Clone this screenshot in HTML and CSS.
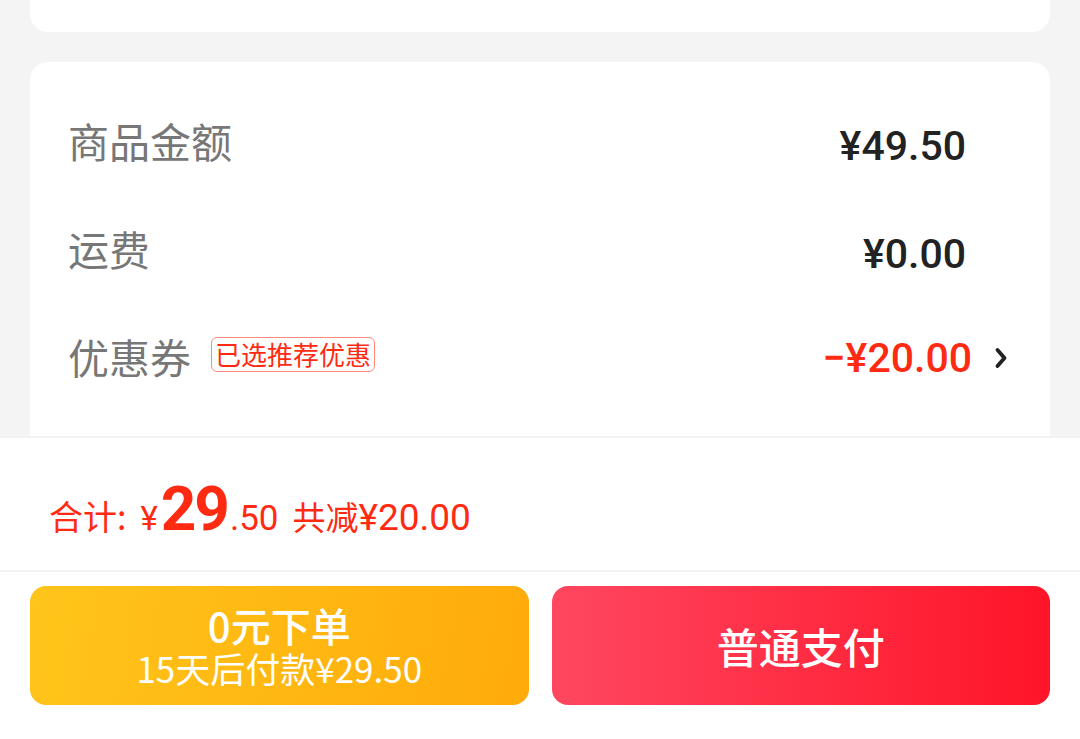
FILE: index.html
```html
<!DOCTYPE html>
<html lang="zh">
<head>
<meta charset="utf-8">
<link rel="stylesheet" href="styles.css">
</head>
<body>
<div class="page">
  <div class="card card-top"></div>
  <div class="card card-sum">
    <div class="row">
      <span class="label">商品金额</span>
      <span class="amount">¥49.50</span>
    </div>
    <div class="row">
      <span class="label">运费</span>
      <span class="amount">¥0.00</span>
    </div>
    <div class="row">
      <span class="label">优惠券</span>
      <span class="tag">已选推荐优惠</span>
      <span class="amount red">−¥20.00</span>
      <svg class="chev" width="14" height="26" viewBox="0 0 14 26"><path d="M3.5 5 L10.5 13 L3.5 21" fill="none" stroke="#222" stroke-width="3.8" stroke-linecap="round" stroke-linejoin="round"/></svg>
    </div>
  </div>
</div>
<div class="bar">
  <div class="total">
    <span class="t-label">合计:</span>
    <span class="t-yen">¥</span><span class="t-int">29</span><span class="t-dec">.50</span>
    <span class="t-save">共减</span><span class="t-save-num">¥20.00</span>
  </div>
  <div class="actions">
    <button class="btn btn-later">
      <span class="b-main">0元下单</span>
      <span class="b-sub">15天后付款¥29.50</span>
    </button>
    <button class="btn btn-pay">普通支付</button>
  </div>
</div>
</body>
</html>
```

FILE: styles.css
```css
html, body {
  margin: 0;
  padding: 0;
  height: 100%;
  overflow: hidden;
  background: #f4f4f4;
  font-family: "Noto Sans CJK SC", "Noto Sans", sans-serif;
}
.page {
  display: flex;
  flex-direction: column;
  gap: 30px;
  padding: 0 30px;
}
.card {
  background: #fff;
  border-radius: 18px;
}
.card-top {
  height: 32px;
  border-radius: 0 0 18px 18px;
}
.card-sum {
  padding: 27px 38px 60px 38px;
  display: flex;
  flex-direction: column;
}
.row {
  height: 108px;
  display: flex;
  align-items: center;
}
.label {
  font-size: 41px;
  color: #777;
  line-height: 1;
  margin-top: -6px;
}
.tag {
  margin-left: 20px;
  font-size: 26px;
  line-height: 1;
  color: #ff2a12;
  border: 1px solid #ff8a7a;
  border-radius: 6px;
  padding: 3px 3px 4px;
  margin-top: -10px;
}
.amount {
  margin-left: auto;
  margin-right: 46px;
  font-family: Roboto, "Noto Sans", sans-serif;
  font-weight: 500;
  font-size: 41px;
  color: #222;
  margin-top: 6px;
}
.row:nth-child(3) .amount {
  margin-right: 22px;
  margin-top: -2px;
}
.red { color: #ff2a12; }
.chev { margin-right: 4px; margin-top: -2px; }
.bar {
  position: fixed;
  left: 0;
  right: 0;
  bottom: 0;
  height: 301px;
  background: #fff;
  border-top: 2px solid #f2f2f2;
  display: flex;
  flex-direction: column;
}
.total {
  height: 134px;
  border-bottom: 2px solid #f2f2f2;
  display: flex;
  align-items: baseline;
  padding: 34px 0 0 49px;
  box-sizing: border-box;
  color: #ff2a12;
  font-family: Roboto, "Noto Sans CJK SC", sans-serif;
}
.t-label { font-family: "Noto Sans CJK SC", sans-serif; font-size: 34px; }
.t-yen { margin-left: 14px; font-size: 33px; }
.t-int { font-size: 62px; font-weight: 700; letter-spacing: -2px; margin-left: 3px; }
.t-dec { font-size: 35px; margin-left: 2px; }
.t-save { margin-left: 14px; font-size: 33px; font-family: "Noto Sans CJK SC", sans-serif; }
.t-save-num { font-size: 37px; }
.actions {
  display: flex;
  gap: 23px;
  padding: 14px 30px 0 30px;
}
.btn {
  flex: 1;
  height: 119px;
  border: none;
  border-radius: 16px;
  color: #fff;
  font-family: "Noto Sans CJK SC", sans-serif;
  display: flex;
  flex-direction: column;
  align-items: center;
  justify-content: center;
  padding: 0;
}
.btn-later {
  background: linear-gradient(100deg, #ffc51a 0%, #ffab0a 100%);
}
.btn-pay {
  background: linear-gradient(90deg, #ff4760 0%, #ff1428 100%);
  font-size: 42px;
  font-weight: 500;
}
.b-main { font-size: 40px; font-weight: 500; line-height: 44px; }
.b-sub { font-size: 35px; line-height: 42px; }
```
